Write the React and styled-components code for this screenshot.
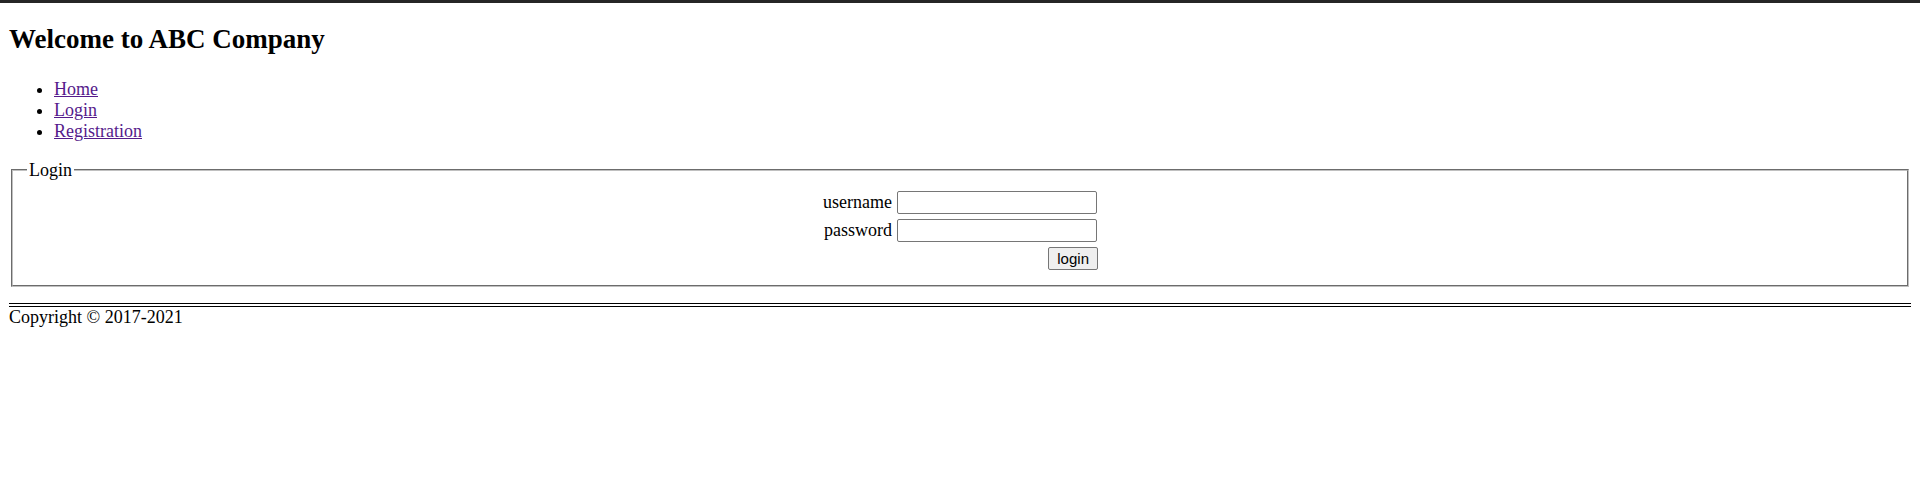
import React from "react";
import styled, { createGlobalStyle } from "styled-components";

const GlobalStyle = createGlobalStyle`
  html, body {
    margin: 0;
    padding: 0;
    background: #fff;
  }
  body {
    font-family: "Liberation Serif", "Times New Roman", serif;
    font-size: 18px;
    color: #000;
  }
`;

const TopBar = styled.div`
  height: 3px;
  background: #262626;
`;

const Page = styled.div`
  padding: 0 9px;
`;

const Title = styled.h2`
  font-size: 27px;
  font-weight: bold;
  line-height: normal;
  margin: 20.7px 0 0;
`;

const NavList = styled.ul`
  margin: 24px 0 18px;
  padding-left: 45px;
  list-style: disc;
`;

const NavLink = styled.a`
  color: #551a8b;
  text-decoration: underline;
`;

const LoginForm = styled.form`
  margin: 0 0 17px;
`;

const Fieldset = styled.fieldset`
  margin: 0 2.25px;
  padding: 6.3px 13.5px 11.5px;
  border: 2px groove rgb(192, 192, 192);
`;

const Legend = styled.legend`
  padding: 0 2.25px;
  font-size: 18px;
`;

const FormTable = styled.table`
  margin: 0 auto;
  border-collapse: separate;
  border-spacing: 3px;
`;

const Cell = styled.td`
  padding: 1px;
  vertical-align: middle;
  text-align: ${(p) => p.$align || "left"};
`;

const TextInput = styled.input`
  display: block;
  box-sizing: border-box;
  width: 200px;
  height: 23px;
  margin: 0;
  padding: 1px 2px;
  border: 1px solid #767676;
  border-radius: 2px;
  font: 15px "Liberation Sans", Arial, sans-serif;
`;

const SubmitButton = styled.button`
  display: block;
  margin: 0 -1px 0 auto;
  height: 23px;
  padding: 0 8px;
  border: 1px solid #767676;
  border-radius: 2px;
  background: #efefef;
  color: #000;
  font: 15px "Liberation Sans", Arial, sans-serif;
`;

const Footer = styled.div`
  border-top: 4px double #000;
  line-height: normal;
  margin-top: -1px;
`;

const links = ["Home", "Login", "Registration"];

const App = () => {
  const [username, setUsername] = React.useState("");
  const [password, setPassword] = React.useState("");

  return (
    <>
      <GlobalStyle />
      <TopBar />
      <Page>
        <Title>Welcome to ABC Company</Title>
        <NavList>
          {links.map((l) => (
            <li key={l}>
              <NavLink href="#">{l}</NavLink>
            </li>
          ))}
        </NavList>
        <LoginForm onSubmit={(e) => e.preventDefault()}>
          <Fieldset>
            <Legend>Login</Legend>
            <FormTable>
              <tbody>
                <tr>
                  <Cell $align="right">username</Cell>
                  <Cell>
                    <TextInput
                      type="text"
                      value={username}
                      onChange={(e) => setUsername(e.target.value)}
                    />
                  </Cell>
                </tr>
                <tr>
                  <Cell $align="right">password</Cell>
                  <Cell>
                    <TextInput
                      type="password"
                      value={password}
                      onChange={(e) => setPassword(e.target.value)}
                    />
                  </Cell>
                </tr>
                <tr>
                  <Cell colSpan={2} $align="right">
                    <SubmitButton type="submit">login</SubmitButton>
                  </Cell>
                </tr>
              </tbody>
            </FormTable>
          </Fieldset>
        </LoginForm>
        <Footer>Copyright © 2017-2021</Footer>
      </Page>
    </>
  );
};

export default App;
